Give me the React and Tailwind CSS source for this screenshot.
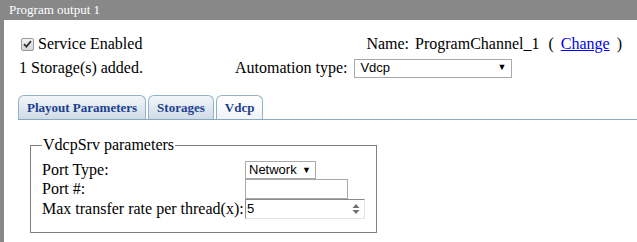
import React from 'react';

const Check = () => (
    <span className="flex h-[13px] w-[13px] items-center justify-center rounded-[2px] border border-[#9a9a9a] bg-gradient-to-b from-[#f2f2f2] to-[#d6d6d6]">
        <svg width="9" height="8" viewBox="0 0 9 8">
            <path d="M1 4.2 L3.4 6.6 L8 1.2" fill="none" stroke="#333" strokeWidth="1.8" />
        </svg>
    </span>
);

const Spin = () => (
    <svg width="8" height="12" viewBox="0 0 8 12">
        <path d="M4 1 L7.5 5 L0.5 5 Z" fill="#6f6f6f" />
        <path d="M4 11 L7.5 7 L0.5 7 Z" fill="#6f6f6f" />
    </svg>
);

const Tab = ({ label, active }) => (
    <div
        className={`flex h-[24px] items-center rounded-t-[6px] border border-b-0 border-[#8fb2c9] px-[8px] text-[13px] font-bold text-[#1d3f8f] ${
            active ? 'bg-gradient-to-b from-white to-[#f1f4f7]' : 'bg-gradient-to-b from-[#f3f6f9] to-[#cfdce7]'
        }`}
    >
        {label}
    </div>
);

export default () => {
    return (
        <div className="h-[242px] w-[637px] overflow-hidden bg-[#888888] font-['Liberation_Serif',serif] text-[16px] text-black">
            <div className="h-[20px] pl-[9px] text-[13px] leading-[20px] text-white">Program output 1</div>
            <div className="ml-[4px] h-[222px] bg-white">
                <div className="pl-[14px] pr-[15px] pt-[12px]">
                    <div className="flex h-[24px] items-center justify-between">
                        <div className="flex items-center">
                            <span className="ml-[3px]"><Check /></span>
                            <span className="ml-[4px]">Service Enabled</span>
                        </div>
                        <div className="flex items-center">
                            <span>Name:</span>
                            <span className="ml-[6px]">ProgramChannel_1</span>
                            <span className="ml-[9px]">(</span>
                            <a href="#" className="ml-[7px] text-[#0000ee] underline">Change</a>
                            <span className="ml-[7px]">)</span>
                        </div>
                    </div>
                    <div className="flex h-[24px] items-center">
                        <span className="w-[217px] pl-[1px]">1 Storage(s) added.</span>
                        <span>Automation type:</span>
                        <div className="ml-[7px] flex h-[19px] w-[158px] items-center justify-between border border-[#a9a9a9] bg-white pl-[5px] pr-[5px] font-['Liberation_Sans',sans-serif] text-[13px]">
                            <span>Vdcp</span>
                            <span className="text-[9px]">▼</span>
                        </div>
                    </div>
                </div>

                <div className="ml-[14px] mt-[15px] flex items-end gap-[2px] border-b border-[#86a9c0]">
                    <Tab label="Playout Parameters" />
                    <Tab label="Storages" />
                    <Tab label="Vdcp" active />
                </div>

                <fieldset className="ml-[26px] mt-[16px] w-[347px] border border-[#808080] px-[11px] pb-[13px]">
                    <legend className="px-[1px] leading-[18px]">VdcpSrv parameters</legend>
                    <div className="mt-[6px] grid grid-cols-[203px_auto] leading-[18px]">
                        <div className="flex h-[19px] items-center">Port Type:</div>
                        <div className="flex h-[19px] items-end">
                            <div className="flex h-[18px] w-[71px] items-center justify-between border border-[#a9a9a9] bg-white pl-[3px] pr-[4px] font-['Liberation_Sans',sans-serif] text-[13px]">
                                <span>Network</span>
                                <span className="text-[9px]">▼</span>
                            </div>
                        </div>
                        <div className="flex h-[20px] items-center">Port #:</div>
                        <div className="h-[20px] w-[103px] border border-[#a9a9a9] bg-white" />
                        <div className="flex h-[20px] items-center">Max transfer rate per thread(x):</div>
                        <div className="flex h-[20px] w-[120px] items-center justify-between border border-b-[#e3e3e3] border-l-[#8a8a8a] border-r-[#e3e3e3] border-t-[#8a8a8a] bg-white pl-[1px] pr-[4px] font-['Liberation_Sans',sans-serif] text-[13px]">
                            <span>5</span>
                            <Spin />
                        </div>
                    </div>
                </fieldset>
            </div>
        </div>
    );
};
